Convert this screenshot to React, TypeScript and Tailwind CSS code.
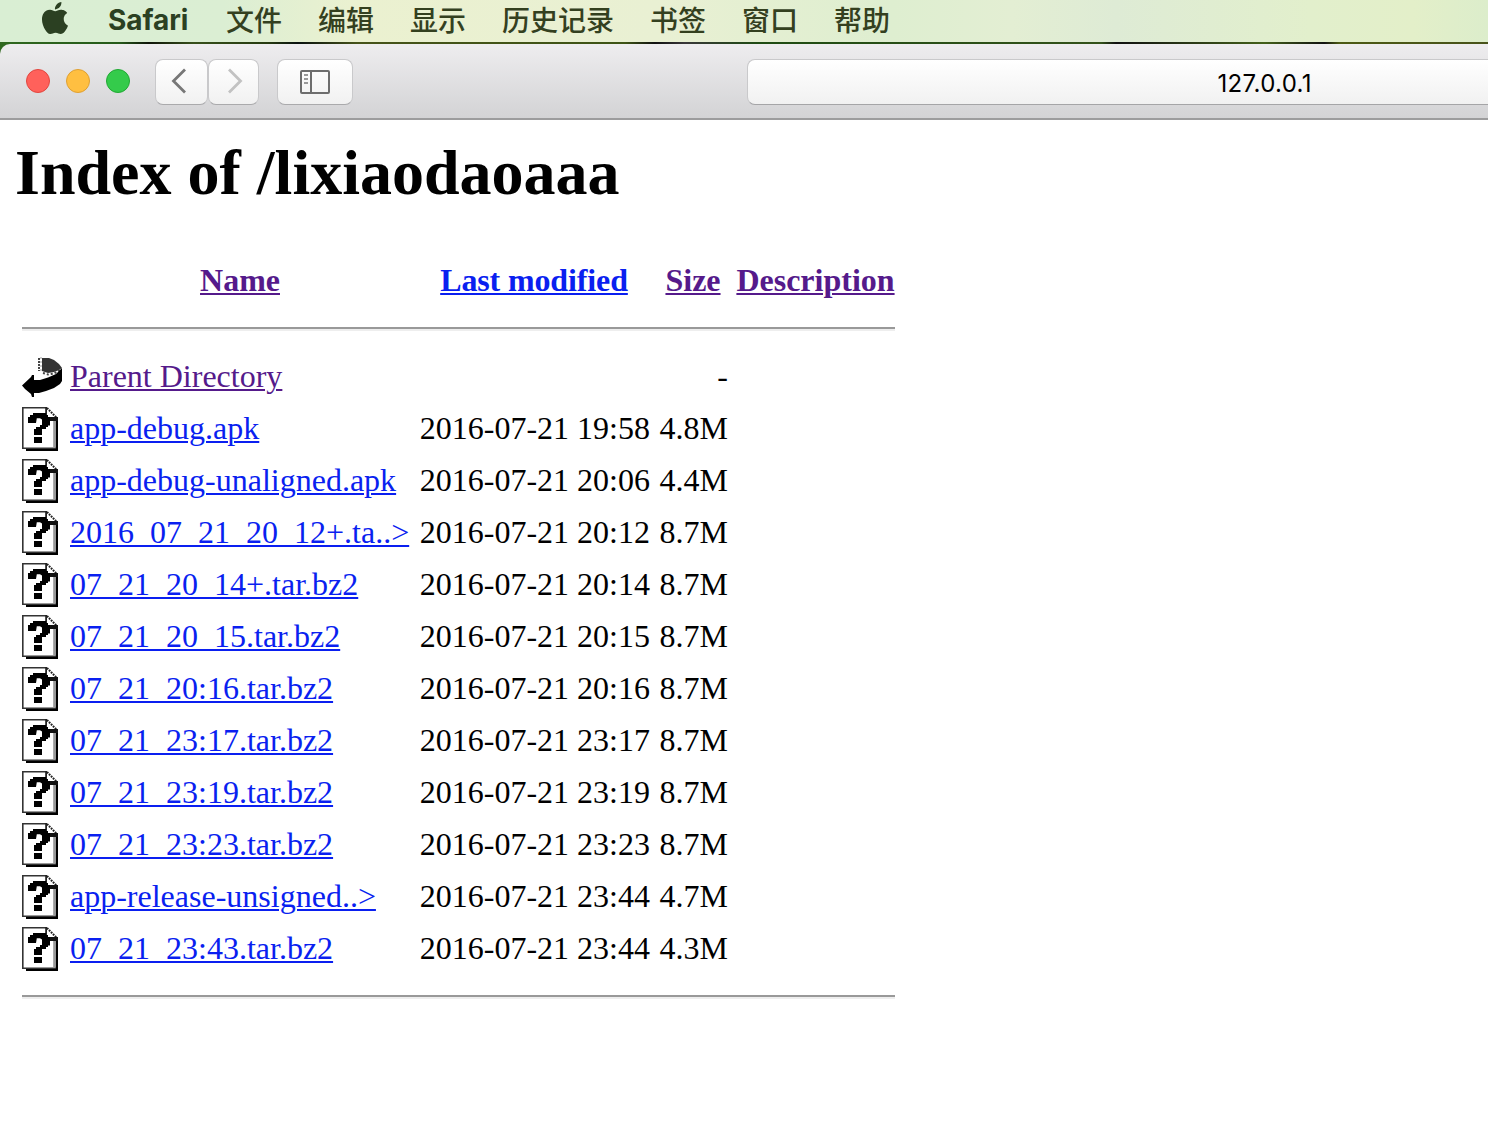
import React from "react";
import { SiApple } from "react-icons/si";

const menus = [
  { label: "文件", pad: "ml-[37px]" },
  { label: "编辑", pad: "ml-9" },
  { label: "显示", pad: "ml-9" },
  { label: "历史记录", pad: "ml-9" },
  { label: "书签", pad: "ml-9" },
  { label: "窗口", pad: "ml-9" },
  { label: "帮助", pad: "ml-9" },
];

const files = [
  { name: "app-debug.apk", date: "2016-07-21 19:58", size: "4.8M" },
  { name: "app-debug-unaligned.apk", date: "2016-07-21 20:06", size: "4.4M" },
  { name: "2016_07_21_20_12+.ta..>", date: "2016-07-21 20:12", size: "8.7M" },
  { name: "07_21_20_14+.tar.bz2", date: "2016-07-21 20:14", size: "8.7M" },
  { name: "07_21_20_15.tar.bz2", date: "2016-07-21 20:15", size: "8.7M" },
  { name: "07_21_20:16.tar.bz2", date: "2016-07-21 20:16", size: "8.7M" },
  { name: "07_21_23:17.tar.bz2", date: "2016-07-21 23:17", size: "8.7M" },
  { name: "07_21_23:19.tar.bz2", date: "2016-07-21 23:19", size: "8.7M" },
  { name: "07_21_23:23.tar.bz2", date: "2016-07-21 23:23", size: "8.7M" },
  { name: "app-release-unsigned..>", date: "2016-07-21 23:44", size: "4.7M" },
  { name: "07_21_23:43.tar.bz2", date: "2016-07-21 23:44", size: "4.3M" },
];

const row = "grid grid-cols-[40px_340px_232px_70px_159px] gap-x-2 items-center";
const link = "underline decoration-2 underline-offset-2";
const button =
  "flex items-center justify-center h-[46px] rounded-lg border border-[#c9c9cb] border-b-[#aaaaac] bg-gradient-to-b from-white to-[#f1f1f1]";

function UnknownIcon() {
  return (
    <svg width="40" height="44" viewBox="0 0 20 22">
      <path d="M2 20H16.5V6H18V22H2Z" fill="#000" />
      <path d="M.4.4H12L16.8 5.5V20.6H.4Z" fill="#fff" />
      <path d="M12 .4H.4V20.6H16.8" fill="none" stroke="#333" strokeWidth=".8" />
      <path d="M15.6 6.5H16.8V20H15.6Z" fill="#999" />
      <path d="M11.6 0H12.5V6H11.6Z" fill="#222" />
      <path d="M12.5 .5L17.5 5.5" fill="none" stroke="#222" strokeWidth="1" strokeDasharray=".9 .5" />
      <path d="M12 5H18V7H14V6H12Z" fill="#111" />
      <path
        d="M5.5 3H12V4H13V5H14V9.2H13V10H12V11H10V14H6V11H7V10H9V9H10V6.3L9 5.6H7.4L7 8H3V5H4V4H5.5Z"
        fill="#000"
      />
      <path d="M6 15H10V18H6Z" fill="#000" />
    </svg>
  );
}

function BackIcon() {
  return (
    <svg width="40" height="40" viewBox="0 0 40 40">
      <path d="M20 1H27L32 3L37 7L40 11L37 13L32 15L26 16L20 14Z" fill="#333" />
      <path d="M17 1V14" stroke="#444" strokeWidth="2" strokeDasharray="2 1" />
      <path d="M19 0V14" stroke="#999" strokeWidth="1" strokeDasharray="2 2" />
      <path d="M21 16L26 17.5L32 16.5L38 13" stroke="#444" strokeWidth="2" strokeDasharray="2 2" fill="none" />
      <path
        d="M0 28.5L9 20L10 18H12V23H18L26 20.5L34 17L38 13L40 11V24L38 27L32 31L24 34L17 36H12V40H10L9 37L3 32Z"
        fill="#000"
      />
    </svg>
  );
}

function Rule() {
  return <div className="h-1 w-[873px] border-t-2 border-b-2 border-t-[#999] border-b-[#eee]" />;
}

export default function App() {
  return (
    <div className="h-[1128px] w-[1488px] overflow-hidden bg-white">
      <header className="flex h-[42px] items-center bg-[linear-gradient(to_right,#d9eed3,#dbeed3_15%,#ebf1d0_24%,#e9f0d3_44%,#deeed0_60%,#e3eed3_68%,#deebd5_75%,#e2efcc_88%,#e3efc9_95%,#dcedcb)] font-['Inter','Noto_Sans_CJK_SC',sans-serif] text-[28px] leading-[40px] text-[#2b4022]">
        <SiApple className="mb-[7px] ml-[39px] size-8 shrink-0" />
        <span className="mb-0.5 ml-[37px] w-[81px] text-[28px] font-bold tracking-[-0.05px]">Safari</span>
        {menus.map((m) => (
          <span key={m.label} className={`${m.pad} mb-1 font-['Noto_Sans_CJK_SC',sans-serif] font-medium whitespace-nowrap text-[#34401f]`}>
            {m.label}
          </span>
        ))}
      </header>
      <div className="bg-[linear-gradient(to_right,#30681f,#265b1b_8%,#10150a_10%,#37501b_13%,#263b10_18%,#0a1210_20%,#46531a_24%,#3e5415_42%,#111_44%,#39373a_46%,#1f4c13_51%,#33521a_74%,#111_75%,#43601a_85%,#111_89%,#4c5a14_90%,#48531a)] pt-0.5">
        <div className="flex h-[76px] items-center rounded-tl-[10px] border-b-2 border-[#9c9c9d] bg-gradient-to-b from-[#eeedef] to-[#d3d3d5]">
          <div className="ml-[26px] flex gap-4">
            <i className="size-6 rounded-full border border-[#e2463f] bg-[#ff615b]" />
            <i className="size-6 rounded-full border border-[#dfa033] bg-[#ffbf41]" />
            <i className="size-6 rounded-full border border-[#21a934] bg-[#34cb4b]" />
          </div>
          <div className="ml-[25px] mt-0.5 flex">
            <div className={`${button} w-[53px]`}>
              <svg width="16" height="26" viewBox="0 0 16 26" className="-ml-1.5 mb-0.5" fill="none" stroke="#777" strokeWidth="2.8">
                <path d="M14 1.5L2.5 13L14 24.5" />
              </svg>
            </div>
            <div className={`${button} w-[51px]`}>
              <svg width="16" height="26" viewBox="0 0 16 26" className="ml-0.5 mb-0.5" fill="none" stroke="#c2c2c2" strokeWidth="2.8">
                <path d="M2 1.5L13.5 13L2 24.5" />
              </svg>
            </div>
          </div>
          <div className={`${button} ml-[18px] mt-0.5 w-[76px]`}>
            <svg width="30" height="24" viewBox="0 0 30 24" fill="none" stroke="#6d6d6d" strokeWidth="2">
              <rect x="1" y="1" width="28" height="22" rx="1" />
              <path d="M11 1V23" />
              <path d="M4 5H8M4 9H8M4 13H8" stroke="#999" />
            </svg>
          </div>
          <div className="ml-[394px] mt-0.5 flex h-[46px] flex-1 items-center rounded-l-lg border border-r-0 border-[#c9c9cb] border-b-[#a5a5a7] bg-gradient-to-b from-white to-[#f1f1f1]">
            <span className="ml-[469.5px] mt-1 font-['Inter',sans-serif] text-[24px] leading-7 tracking-[0.35px] text-black">127.0.0.1</span>
          </div>
        </div>
      </div>
      <main className="font-['Liberation_Serif',serif] text-[32px] leading-9 text-black">
        <h1 className="ml-[15px] pt-4 text-[64px] leading-[74px] font-bold">Index of /lixiaodaoaaa</h1>
        <div className="ml-[22px] pt-[52px]">
          <div className={`${row} text-center font-bold text-[#551a8b]`}>
            <span />
            <span><a className={link}>Name</a></span>
            <span><a className={`${link} tracking-[-0.13px] text-[#0a1ff0]`}>Last modified</a></span>
            <span><a className={link}>Size</a></span>
            <span><a className={link}>Description</a></span>
          </div>
          <div className="h-[29px]" />
          <Rule />
          <div className="py-5">
            <div className={`${row} h-[52px]`}>
              <BackIcon />
              <a className={`${link} mb-0.5 text-[#551a8b]`}>Parent Directory</a>
              <span />
              <span className="mb-0.5 text-right">-</span>
            </div>
            {files.map((f) => (
              <div key={f.name} className={`${row} h-[52px]`}>
                <UnknownIcon />
                <a className={`${link} mb-0.5 whitespace-nowrap text-[#0a1ff0]`}>{f.name}</a>
                <span className="mb-0.5 text-right whitespace-nowrap">{f.date}</span>
                <span className="mb-0.5 text-right">{f.size}</span>
              </div>
            ))}
          </div>
          <Rule />
        </div>
      </main>
    </div>
  );
}
